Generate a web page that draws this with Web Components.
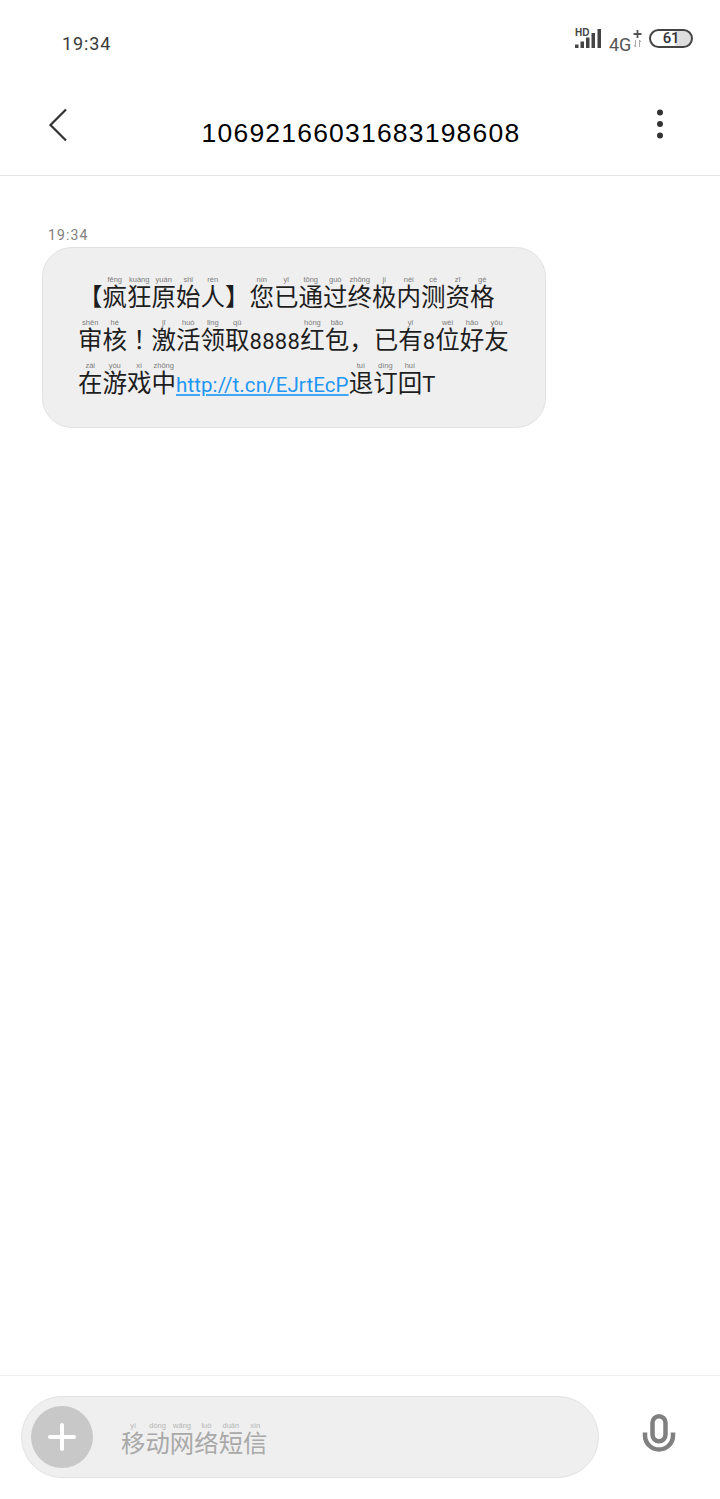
<!DOCTYPE html>
<html lang="zh">
<head>
<meta charset="utf-8">
<title>短信</title>
<style>
  html, body { margin: 0; padding: 0; background: #fff; }
  body { font-family: "Roboto", "Noto Sans CJK SC", sans-serif; }
</style>
</head>
<body>
<sms-page>
  <status-bar slot="status"></status-bar>
  <title-bar slot="title" number="10692166031683198608"></title-bar>
  <message-bubble slot="thread" time="19:34">
    <text-line><pinyin-text text="【疯狂原始人】您已通过终极内测资格" py="- fēng kuàng yuán shǐ rén - nín yǐ tōng guò zhōng jí nèi cè zī gé"></pinyin-text></text-line>
    <text-line><pinyin-text text="审核！激活领取" py="shěn hé - jī huó lǐng qǔ"></pinyin-text><latin-run>8888</latin-run><pinyin-text text="红包，已有" py="hóng bāo - - yǐ yǒu"></pinyin-text><latin-run>8</latin-run><pinyin-text text="位好友" py="wèi hǎo yǒu"></pinyin-text></text-line>
    <text-line><pinyin-text text="在游戏中" py="zài yóu xì zhōng"></pinyin-text><latin-run link>http://t.cn/EJrtEcP</latin-run><pinyin-text text="退订回" py="tuì dìng huí"></pinyin-text><latin-run>T</latin-run></text-line>
  </message-bubble>
  <compose-bar slot="compose"></compose-bar>
</sms-page>

<script>
// pagina inteira: status, titulo, conversa, caixa de texto
class SmsPage extends HTMLElement {
  constructor() {
    super();
    this.attachShadow({ mode: 'open' });
  }
  connectedCallback() {
    this.shadowRoot.innerHTML = `
      <style>
        :host { display: flex; flex-direction: column; width: 720px; height: 1499px; background: #fff; overflow: hidden; }
        .thread { flex: 1; display: block; padding: 50px 0 0 42px; }
      </style>
      <slot name="status"></slot>
      <slot name="title"></slot>
      <div class="thread"><slot name="thread"></slot></div>
      <slot name="compose"></slot>
    `;
  }
}

class StatusBar extends HTMLElement {
  constructor() {
    super();
    this.attachShadow({ mode: 'open' });
  }
  connectedCallback() {
    this.shadowRoot.innerHTML = `
      <style>
        :host { display: flex; justify-content: space-between; height: 84px; padding: 0 27px 0 62px; box-sizing: border-box; color: #333; font-family: "Roboto", sans-serif; }
        .time { margin-top: 33px; font-size: 18px; line-height: 22px; letter-spacing: 0.9px; color: #3a3a3a; }
        .icons { display: flex; align-items: flex-start; margin-top: 27px; }
        .net { position: relative; width: 34px; height: 26px; }
        svg { display: block; }
        .hd { position: absolute; left: 2px; top: 1px; font: bold 10px/10px "Liberation Sans", sans-serif; color: #444; }
        .g { margin: 9px 0 0 2px; font-size: 18px; line-height: 18px; color: #555; width: 23px; }
        .batt { width: 44px; height: 19px; margin: 2px 0 0 6px; box-sizing: border-box; border: 2.500px solid #444; border-radius: 10px; background: linear-gradient(90deg, #fff 0 58%, #dedede 62% 100%); text-align: center; font-size: 15px; font-weight: 500; line-height: 14px; letter-spacing: -0.3px; color: #333; }
      </style>
      <span class="time">19:34</span>
      <div class="icons">
        <div class="net">
          <span class="hd">HD</span>
          <svg width="34" height="26" viewBox="0 0 34 26" fill="#444">
            <rect x="2" y="17.500" width="3.500" height="3.500" />
            <rect x="7.500" y="14.500" width="3.500" height="6.500" />
            <rect x="13" y="10.500" width="3.500" height="10.500" />
            <rect x="18.500" y="6" width="3.500" height="15" />
            <rect x="24.500" y="2" width="3.500" height="19" />
          </svg>
        </div>
        <span class="g">4G</span>
        <svg width="11" height="24" viewBox="0 0 11 24" fill="none" stroke="#555">
          <path d="M5.500 3v8M1.500 7h8" stroke-width="1.800" />
          <path d="M3.500 13v7M3.500 20l-1.500-2M7.500 20v-7M7.500 13l1.500 2" stroke="#aaa" stroke-width="1" />
        </svg>
        <div class="batt">61</div>
      </div>
    `;
  }
}

class TitleBar extends HTMLElement {
  constructor() {
    super();
    this.attachShadow({ mode: 'open' });
  }
  connectedCallback() {
    const number = this.getAttribute('number');
    this.shadowRoot.innerHTML = `
      <style>
        :host { display: flex; align-items: flex-start; justify-content: space-between; height: 92px; box-sizing: border-box; border-bottom: 1px solid #e6e6e6; padding: 24px 48px 0 48px; }
        .num { margin: 11px 0 0 6px; font: 26.500px/28px "Liberation Sans", sans-serif; letter-spacing: 1.200px; color: #000; }
        svg { display: block; }
      </style>
      <svg width="20" height="34" viewBox="0 0 20 34" fill="none" stroke="#333" stroke-width="2.200">
        <path d="M18 1.500 2.500 17 18 32.500" />
      </svg>
      <div class="num">${number}</div>
      <svg width="24" height="34" viewBox="0 0 24 34" fill="#333">
        <circle cx="12" cy="4.500" r="3" />
        <circle cx="12" cy="16" r="3" />
        <circle cx="12" cy="27.500" r="3" />
      </svg>
    `;
  }
}

// texto chines com pinyin em cima de cada caractere
class PinyinText extends HTMLElement {
  constructor() {
    super();
    this.attachShadow({ mode: 'open' });
  }
  connectedCallback() {
    const chars = Array.from(this.getAttribute('text'));
    const py = this.getAttribute('py').split(' ');
    const body = chars.map((c, i) => {
      if (py[i] && py[i] !== '-') return `<ruby>${c}<rt>${py[i]}</rt></ruby>`;
      return c === '！' ? `<span class="mid" lang="zh-TW">${c}</span>` : c;
    }).join('');
    this.shadowRoot.innerHTML = `<style>
        :host { display: inline; }
        ruby { ruby-position: over; }
        rt { font: 7.500px/10px "Liberation Sans", sans-serif; color: var(--py-color, #7d7d7d); transform: scaleY(1.25); }
        .mid { font-family: "Noto Sans CJK TC", sans-serif; }
      </style>${body}`;
  }
}

// uma linha da mensagem, sem quebra
class TextLine extends HTMLElement {
  constructor() {
    super();
    this.attachShadow({ mode: 'open' });
  }
  connectedCallback() {
    this.shadowRoot.innerHTML = `<style>:host { display: block; white-space: nowrap; height: 43px; }</style><slot></slot>`;
  }
}

// numeros e letras dentro da mensagem
class LatinRun extends HTMLElement {
  constructor() {
    super();
    this.attachShadow({ mode: 'open' });
  }
  connectedCallback() {
    this.shadowRoot.innerHTML = `<style>
        :host { display: inline; font-family: "Roboto", sans-serif; font-size: 22px; letter-spacing: 0.3px; }
        :host([link]) { color: #2196f3; font-size: 20.500px; letter-spacing: 0.1px; text-decoration: underline; text-decoration-color: #42a5f5; text-decoration-thickness: 2px; text-underline-offset: 2px; }
      </style><slot></slot>`;
  }
}

class MessageBubble extends HTMLElement {
  constructor() {
    super();
    this.attachShadow({ mode: 'open' });
  }
  connectedCallback() {
    const time = this.getAttribute('time');
    this.shadowRoot.innerHTML = `
      <style>
        :host { display: block; width: 504px; }
        .time { margin-left: 6px; font: 14px/18px "Roboto", sans-serif; letter-spacing: 1.100px; color: #808080; }
        .bubble { margin-top: 3px; box-sizing: border-box; height: 181px; background: #efefef; border: 1px solid #e2e2e2; border-radius: 30px; padding: 26px 34px 0 35px; font: 24.500px/43px "Noto Sans CJK SC", sans-serif; color: #1e1e1e; }
      </style>
      <div class="time">${time}</div>
      <div class="bubble"><slot></slot></div>
    `;
  }
}

class ComposeBar extends HTMLElement {
  constructor() {
    super();
    this.attachShadow({ mode: 'open' });
  }
  connectedCallback() {
    this.shadowRoot.innerHTML = `
      <style>
        :host { display: flex; align-items: flex-start; justify-content: space-between; height: 124px; box-sizing: border-box; border-top: 1px solid #eee; padding: 20px 44px 0 21px; }
        .input { display: flex; align-items: center; gap: 28px; width: 578px; height: 82px; box-sizing: border-box; background: #efefef; border: 1px solid #e2e2e2; border-radius: 41px; padding-left: 9px; }
        .plus { display: flex; align-items: center; justify-content: center; width: 62px; height: 62px; border-radius: 50%; background: #c8c8c8; flex: none; }
        .hint { margin-top: 7px; font: 24.400px/34px "Noto Sans CJK SC", sans-serif; color: #a9a9a9; --py-color: #b5b5b5; }
        svg { display: block; }
        .mic { margin-top: 18px; }
      </style>
      <div class="input">
        <div class="plus">
          <svg width="28" height="28" viewBox="0 0 28 28" fill="#fff">
            <rect x="0" y="12" width="28" height="4" rx="2" />
            <rect x="12" y="0" width="4" height="28" rx="2" />
          </svg>
        </div>
        <div class="hint"><pinyin-text text="移动网络短信" py="yí dòng wǎng luò duǎn xìn"></pinyin-text></div>
      </div>
      <svg class="mic" width="34" height="38" viewBox="0 0 34 38" fill="none" stroke="#808080" stroke-width="4.500">
        <rect x="10.500" y="2.300" width="13" height="25" rx="6.500" />
        <path d="M3 18.500v3C3 29.500 9.500 35.500 17 35.500s14-6 14-14v-3" />
      </svg>
    `;
  }
}

customElements.define('sms-page', SmsPage);
customElements.define('status-bar', StatusBar);
customElements.define('title-bar', TitleBar);
customElements.define('pinyin-text', PinyinText);
customElements.define('text-line', TextLine);
customElements.define('latin-run', LatinRun);
customElements.define('message-bubble', MessageBubble);
customElements.define('compose-bar', ComposeBar);
</script>
</body>
</html>
